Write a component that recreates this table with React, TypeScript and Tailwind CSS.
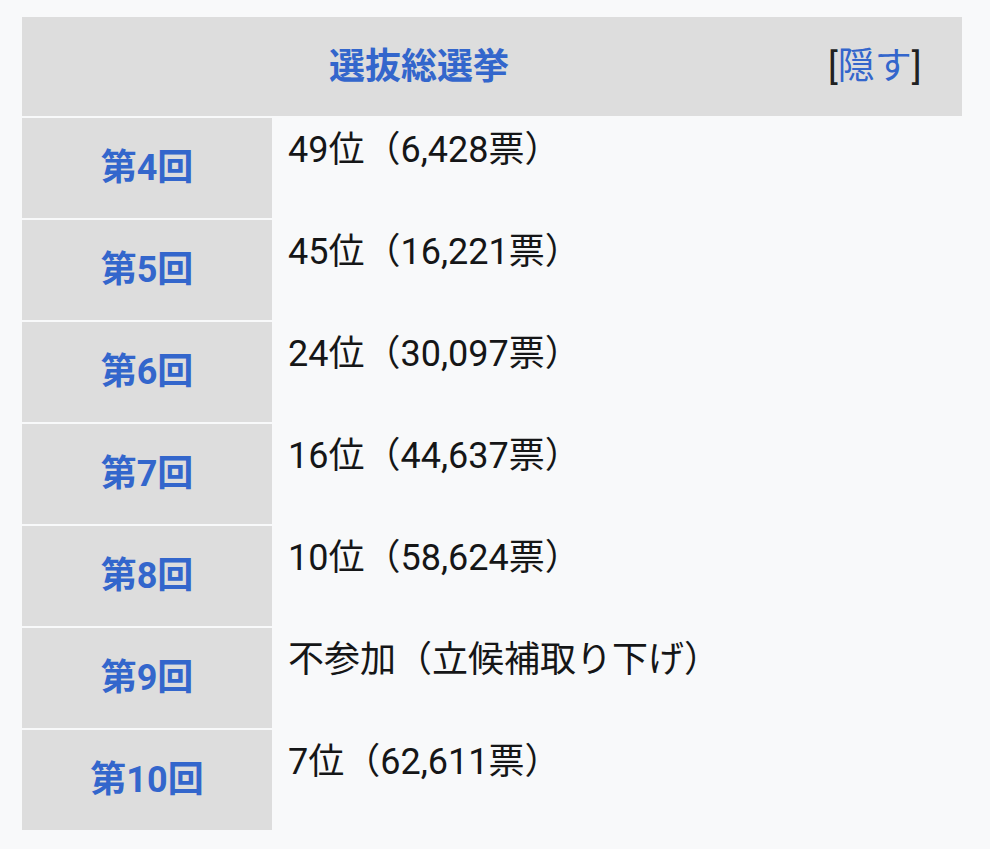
const rows = [
  { label: '第4回', value: '49位（6,428票）' },
  { label: '第5回', value: '45位（16,221票）' },
  { label: '第6回', value: '24位（30,097票）' },
  { label: '第7回', value: '16位（44,637票）' },
  { label: '第8回', value: '10位（58,624票）' },
  { label: '第9回', value: '不参加（立候補取り下げ）' },
  { label: '第10回', value: '7位（62,611票）' },
];

export default function App() {
  return (
    <div
      className="min-h-[849px] bg-[#f8f9fa] pt-[17px] pl-[22px]"
      style={{ fontFamily: 'Roboto, "Noto Sans CJK JP", sans-serif' }}
    >
      <div className="w-[940px] flex flex-col gap-[2px]">
        {/* header */}
        <div className="flex items-center h-[99px] bg-[#dddddd]">
          <div className="flex-1 text-center text-[36px] leading-none font-bold text-[#3366cc]">
            選抜総選挙
          </div>
          <div className="w-[146px] pl-3 text-[37px] leading-none text-[#202122]">
            [<span className="text-[#3366cc]">隠す</span>]
          </div>
        </div>

        {rows.map((row) => (
          <div key={row.label} className="flex gap-[2px] h-[100px]">
            <div className="w-[250px] flex items-center justify-center bg-[#dddddd] text-[36px] leading-none font-bold text-[#3366cc]">
              {row.label}
            </div>
            <div className="flex-1 pl-[14px] pt-[9px] text-[36px] leading-[1.3] text-[#151617]">
              {row.value}
            </div>
          </div>
        ))}
      </div>
    </div>
  );
}
